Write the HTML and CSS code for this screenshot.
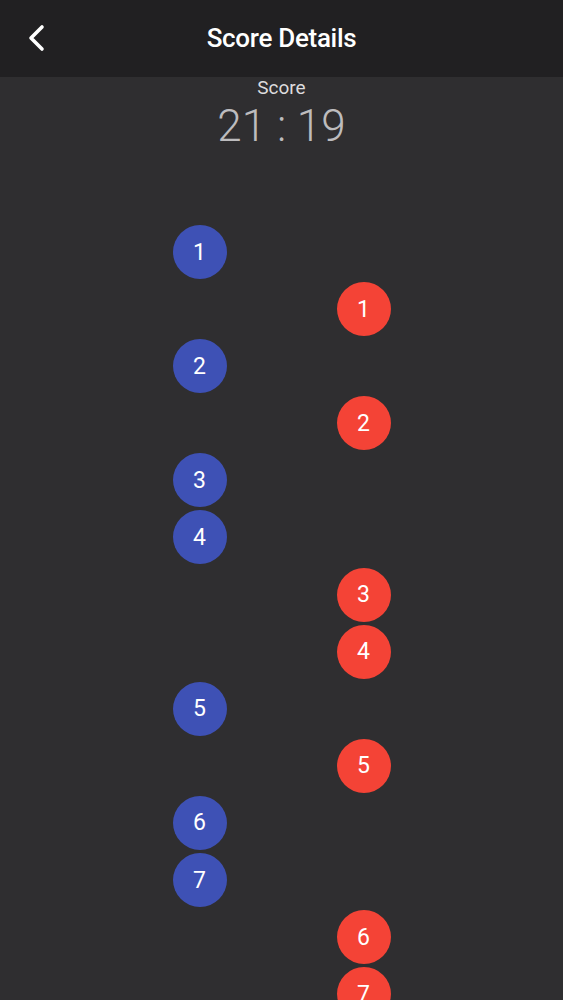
FILE: index.html
```html
<!DOCTYPE html>
<html lang="en">
<head>
    <meta charset="UTF-8">
    <meta name="viewport" content="width=device-width, initial-scale=1.0">
    <title>Score Details</title>
    <link rel="stylesheet" href="styles.css">
</head>
<body>
    <header class="topbar">
        <a class="back" href="#" aria-label="Back">
            <svg width="20" height="28" viewBox="0 0 20 28">
                <polyline points="15,3 4,14 15,25" fill="none" stroke="#fff" stroke-width="3.6" stroke-linecap="round" stroke-linejoin="round"/>
            </svg>
        </a>
        <h1 class="title">Score Details</h1>
    </header>

    <section class="score">
        <div class="score-label">Score</div>
        <div class="score-value">21 : 19</div>
    </section>

    <ul class="points">
        <li class="row"><span class="ball home">1</span></li>
        <li class="row"><span class="ball away">1</span></li>
        <li class="row"><span class="ball home">2</span></li>
        <li class="row"><span class="ball away">2</span></li>
        <li class="row"><span class="ball home">3</span></li>
        <li class="row"><span class="ball home">4</span></li>
        <li class="row"><span class="ball away">3</span></li>
        <li class="row"><span class="ball away">4</span></li>
        <li class="row"><span class="ball home">5</span></li>
        <li class="row"><span class="ball away">5</span></li>
        <li class="row"><span class="ball home">6</span></li>
        <li class="row"><span class="ball home">7</span></li>
        <li class="row"><span class="ball away">6</span></li>
        <li class="row"><span class="ball away">7</span></li>
    </ul>
</body>
</html>
```

FILE: styles.css
```css
body {
    margin: 0;
    padding: 0;
    background: #2f2e30;
    color: #fff;
    font-family: Roboto, 'Liberation Sans', sans-serif;
}
.topbar {
    position: relative;
    height: 77px;
    background: #212022;
    display: flex;
    align-items: center;
    justify-content: center;
}
.back {
    position: absolute;
    left: 27px;
    top: 24px;
    display: block;
    line-height: 0;
}
.title {
    margin: 0 0 2px;
    font-size: 26px;
    font-weight: 500;
    letter-spacing: -0.3px;
}
.score {
    text-align: center;
}
.score-label {
    font-size: 19px;
    line-height: 22px;
    color: #dddcde;
}
.score-value {
    font-size: 44px;
    font-weight: 300;
    line-height: 54px;
    color: #bdbcbe;
}
.points {
    list-style: none;
    margin: 72px 0 0;
    padding: 0;
    display: flex;
    flex-direction: column;
    align-items: center;
    gap: 3.1px;
}
.row {
    width: 218px;
    display: flex;
}
.ball {
    width: 54px;
    height: 54px;
    border-radius: 50%;
    display: flex;
    align-items: center;
    justify-content: center;
    font-size: 23px;
    color: #fff;
}
.home {
    background: #3e51b5;
}
.away {
    background: #f44336;
    margin-left: auto;
}
```
